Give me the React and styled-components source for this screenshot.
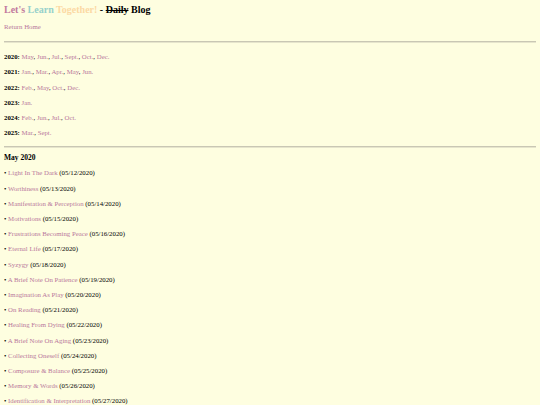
import React from 'react';
import styled, { createGlobalStyle } from 'styled-components';

const GlobalStyle = createGlobalStyle`
  html, body {
    background: #fefee0;
  }
  body {
    margin: 4px;
    font-family: "Liberation Serif", "Times New Roman", serif;
    font-size: 6.8px;
    color: #000;
  }
`;

const Title = styled.h2`
  font-size: 10px;
  font-weight: bold;
  margin: 0 0 8px;
`;

const Word = styled.span`
  color: ${({ tone }) => tone};
`;

const Struck = styled.span`
  text-decoration: line-through;
`;

const Link = styled.a`
  color: #b9789c;
  text-decoration: none;
`;

const Para = styled.p`
  margin: 7px 0;
  line-height: 8.2px;
`;

const Rule = styled.hr`
  margin: ${({ $before }) => $before || 10}px 0 ${({ $after }) => $after || 10}px;
  border: none;
  border-top: 1px solid #c9c7b4;
  border-bottom: 1px solid #e6e5cc;
`;

const MonthTitle = styled.h3`
  font-size: 7.5px;
  font-weight: bold;
  line-height: 9px;
  margin: 0 0 7px;
`;

const archive = [
  ['2020', ['May', 'Jun.', 'Jul.', 'Sept.', 'Oct.', 'Dec.']],
  ['2021', ['Jan.', 'Mar.', 'Apr.', 'May', 'Jun.']],
  ['2022', ['Feb.', 'May', 'Oct.', 'Dec.']],
  ['2023', ['Jan.']],
  ['2024', ['Feb.', 'Jun.', 'Jul.', 'Oct.']],
  ['2025', ['Mar.', 'Sept.']],
];

const posts = [
  ['Light In The Dark', '05/12/2020'],
  ['Worthiness', '05/13/2020'],
  ['Manifestation & Perception', '05/14/2020'],
  ['Motivations', '05/15/2020'],
  ['Frustrations Becoming Peace', '05/16/2020'],
  ['Eternal Life', '05/17/2020'],
  ['Syzygy', '05/18/2020'],
  ['A Brief Note On Patience', '05/19/2020'],
  ['Imagination As Play', '05/20/2020'],
  ['On Reading', '05/21/2020'],
  ['Healing From Dying', '05/22/2020'],
  ['A Brief Note On Aging', '05/23/2020'],
  ['Collecting Oneself', '05/24/2020'],
  ['Composure & Balance', '05/25/2020'],
  ['Memory & Words', '05/26/2020'],
  ['Identification & Interpretation', '05/27/2020'],
  ['Simplicity', '05/28/2020'],
];

export default function App() {
  return (
    <>
      <GlobalStyle />
      <Title>
        <Word tone="#c27a9e">Let's</Word> <Word tone="#96d1cb">Learn</Word>{' '}
        <Word tone="#fcd9a4">Together!</Word> - <Struck>Daily</Struck> Blog
      </Title>
      <Para>
        <Link href="#">Return Home</Link>
      </Para>
      <Rule />
      {archive.map(([year, months]) => (
        <Para key={year}>
          <b>{year}:</b>{' '}
          {months.map((m, i) => (
            <React.Fragment key={m}>
              <Link href="#">{m}</Link>
              {i < months.length - 1 ? ', ' : ''}
            </React.Fragment>
          ))}
        </Para>
      ))}
      <Rule $before={9} $after={5} />
      <MonthTitle>May 2020</MonthTitle>
      {posts.map(([name, date]) => (
        <Para key={date}>
          • <Link href="#">{name}</Link> ({date})
        </Para>
      ))}
    </>
  );
}
